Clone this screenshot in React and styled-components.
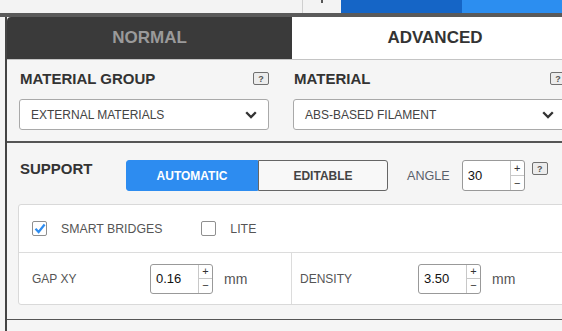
import React from 'react';
import styled, { createGlobalStyle } from 'styled-components';

const GlobalStyle = createGlobalStyle`
  html, body {
    margin: 0;
    padding: 0;
    background: #f4f4f4;
  }
  body {
    font-family: "Liberation Sans", Arial, sans-serif;
  }
`;

const Page = styled.div`
  width: 562px;
  height: 331px;
  overflow: hidden;
  background: #f4f4f4;
`;

/* strip of the host page above the panel */
const TopStrip = styled.div`
  display: flex;
  height: 13px;
`;

const StripCell = styled.div`
  width: ${({ $w }) => ($w ? `${$w}px` : 'auto')};
  flex: ${({ $w }) => ($w ? '0 0 auto' : '1')};
  background: ${({ $bg }) => $bg || '#f3f3f3'};
  display: flex;
  justify-content: center;
`;

const StripMark = styled.span`
  width: 2px;
  height: 3px;
  background: #555;
`;

const Band = styled.div`
  height: 4px;
  background: #5a5a5a;
`;

const Frame = styled.div`
  margin-left: 5px;
  width: 571px;
  border-left: 2px solid #444;
  background: #f5f5f5;
`;

const Tabs = styled.div`
  display: grid;
  grid-template-columns: 285px 1fr;
  height: 42px;
  background: #fff;
  border-bottom: 1px solid #c4c4c4;
`;

const Tab = styled.div`
  display: flex;
  align-items: center;
  justify-content: center;
  font-size: 17px;
  font-weight: bold;
  background: ${({ $active }) => ($active ? '#fff' : '#3a3a3a')};
  color: ${({ $active }) => ($active ? '#333' : '#9a9a9a')};
  border-top-left-radius: ${({ $active }) => ($active ? '0' : '4px')};
`;

const MaterialSection = styled.div`
  display: grid;
  grid-template-columns: 250px 273px;
  column-gap: 24px;
  padding: 10px 12px 11px;
`;

const Field = styled.div`
  display: flex;
  flex-direction: column;
  gap: 12px;
`;

const FieldHead = styled.div`
  display: flex;
  align-items: center;
  justify-content: space-between;
  height: 17px;
`;

const Title = styled.div`
  font-size: 15px;
  font-weight: bold;
  color: #333;
  padding-left: 1px;
  width: ${({ $w }) => ($w ? `${$w}px` : 'auto')};
  flex: 0 0 auto;
`;

const Help = styled.span`
  box-sizing: border-box;
  width: 16px;
  height: 13px;
  border: 1.5px solid #707070;
  border-radius: 2px;
  background: #ececec;
  color: #555;
  font-size: 9px;
  font-weight: bold;
  display: flex;
  align-items: center;
  justify-content: center;
  margin-top: ${({ $top }) => $top || 0}px;
  margin-left: ${({ $left }) => $left || 0}px;
`;

const Select = styled.div`
  box-sizing: border-box;
  height: 31px;
  border: 1px solid #a9a9a9;
  border-radius: 3px;
  background: #fff;
  padding: 0 11px 0 11px;
  display: flex;
  align-items: center;
  justify-content: space-between;
  font-size: 12px;
  color: #444;
`;

const SupportSection = styled.div`
  border-top: 2px solid #555;
  padding: 17px 12px 14px;
`;

const SupportRow = styled.div`
  display: flex;
  align-items: flex-start;
  height: 31px;
`;

const ModeButton = styled.div`
  box-sizing: border-box;
  width: ${({ $w }) => $w}px;
  height: 31px;
  display: flex;
  align-items: center;
  justify-content: center;
  font-size: 12px;
  font-weight: bold;
  background: ${({ $active }) => ($active ? '#2d8cf0' : '#f8f8f8')};
  color: ${({ $active }) => ($active ? '#fff' : '#444')};
  border: 1px solid ${({ $active }) => ($active ? '#2d8cf0' : '#666')};
  border-radius: ${({ $first }) => ($first ? '3px 0 0 3px' : '0 3px 3px 0')};
`;

const InlineLabel = styled.span`
  font-size: 12.6px;
  color: #5a5f6b;
  align-self: center;
  margin: 0 12px 0 19px;
`;

const Spin = styled.div`
  box-sizing: border-box;
  display: flex;
  width: 63px;
  height: ${({ $h }) => $h}px;
  border: 1px solid #999;
  border-radius: 3px;
  background: #fff;
  flex: 0 0 auto;
`;

const SpinValue = styled.div`
  flex: 1;
  display: flex;
  align-items: center;
  padding-left: 5px;
  font-size: 13px;
  color: #111;
`;

const Stepper = styled.div`
  width: 13px;
  border-left: 1px solid #c8c8c8;
  display: flex;
  flex-direction: column;
`;

const Step = styled.div`
  flex: 1;
  display: flex;
  align-items: center;
  justify-content: center;
  font-size: 11px;
  line-height: 1;
  color: #333;
  & + & {
    border-top: 1px solid #c8c8c8;
  }
`;

const Card = styled.div`
  margin: 13px 0 0 -1px;
  width: 548px;
  border: 1px solid #d9d9d9;
  border-radius: 3px;
  background: #fff;
`;

const CheckRow = styled.div`
  height: 47px;
  display: flex;
  align-items: center;
  gap: 39px;
  padding-left: 13px;
  border-bottom: 1px solid #dcdcdc;
`;

const CheckItem = styled.label`
  display: flex;
  align-items: center;
  gap: 14px;
  font-size: 12.3px;
  color: #555;
`;

const Box = styled.span`
  box-sizing: border-box;
  width: 15px;
  height: 15px;
  border: 1px solid #8f8f8f;
  border-radius: 2px;
  background: #fff;
  display: flex;
  align-items: center;
  justify-content: center;
`;

const Cells = styled.div`
  display: grid;
  grid-template-columns: 273px 1fr;
`;

const Cell = styled.div`
  height: 51px;
  display: flex;
  align-items: center;
  padding-left: ${({ $pad }) => $pad}px;
  border-right: ${({ $divider }) => ($divider ? '1px solid #dcdcdc' : 'none')};
`;

const CellLabel = styled.span`
  width: 118px;
  font-size: 12px;
  color: #555;
`;

const Unit = styled.span`
  margin-left: 11px;
  font-size: 14px;
  color: #555;
`;

const Footer = styled.div`
  border-top: 1.5px solid #555;
  height: 12px;
`;

const Chevron = () => (
  <svg width="12" height="8" viewBox="0 0 12 8">
    <polyline points="1.2,1.2 6,6 10.8,1.2" fill="none" stroke="#333" strokeWidth="2.3" />
  </svg>
);

const Check = () => (
  <svg width="12" height="11" viewBox="0 0 12 11">
    <polyline points="1.5,5.8 4.6,9 10.6,1.5" fill="none" stroke="#2d8cf0" strokeWidth="2.2" />
  </svg>
);

const NumberInput = ({ value, h }) => (
  <Spin $h={h}>
    <SpinValue>{value}</SpinValue>
    <Stepper>
      <Step>+</Step>
      <Step>−</Step>
    </Stepper>
  </Spin>
);

const CheckOption = ({ label, checked }) => (
  <CheckItem>
    <Box>{checked && <Check />}</Box>
    {label}
  </CheckItem>
);

export default function App() {
  return (
    <Page>
      <GlobalStyle />
      <TopStrip>
        <StripCell $w={302} />
        <StripCell $w={1} $bg="#cfcfcf" />
        <StripCell $w={38}>
          <StripMark />
        </StripCell>
        <StripCell $w={121} $bg="#1565c6" />
        <StripCell $bg="#2c8ef0" />
      </TopStrip>
      <Band />
      <Frame>
        <Tabs>
          <Tab>NORMAL</Tab>
          <Tab $active>ADVANCED</Tab>
        </Tabs>

        <MaterialSection>
          <Field>
            <FieldHead>
              <Title>MATERIAL GROUP</Title>
              <Help>?</Help>
            </FieldHead>
            <Select>
              EXTERNAL MATERIALS
              <Chevron />
            </Select>
          </Field>
          <Field>
            <FieldHead>
              <Title>MATERIAL</Title>
              <Help>?</Help>
            </FieldHead>
            <Select>
              ABS-BASED FILAMENT
              <Chevron />
            </Select>
          </Field>
        </MaterialSection>

        <SupportSection>
          <SupportRow>
            <Title $w={106}>SUPPORT</Title>
            <ModeButton $w={132} $active $first>AUTOMATIC</ModeButton>
            <ModeButton $w={130}>EDITABLE</ModeButton>
            <InlineLabel>ANGLE</InlineLabel>
            <NumberInput value="30" h={31} />
            <Help $top={2} $left={7}>?</Help>
          </SupportRow>

          <Card>
            <CheckRow>
              <CheckOption label="SMART BRIDGES" checked />
              <CheckOption label="LITE" />
            </CheckRow>
            <Cells>
              <Cell $pad={13} $divider>
                <CellLabel>GAP XY</CellLabel>
                <NumberInput value="0.16" h={30} />
                <Unit>mm</Unit>
              </Cell>
              <Cell $pad={8}>
                <CellLabel>DENSITY</CellLabel>
                <NumberInput value="3.50" h={30} />
                <Unit>mm</Unit>
              </Cell>
            </Cells>
          </Card>
        </SupportSection>
        <Footer />
      </Frame>
    </Page>
  );
}
